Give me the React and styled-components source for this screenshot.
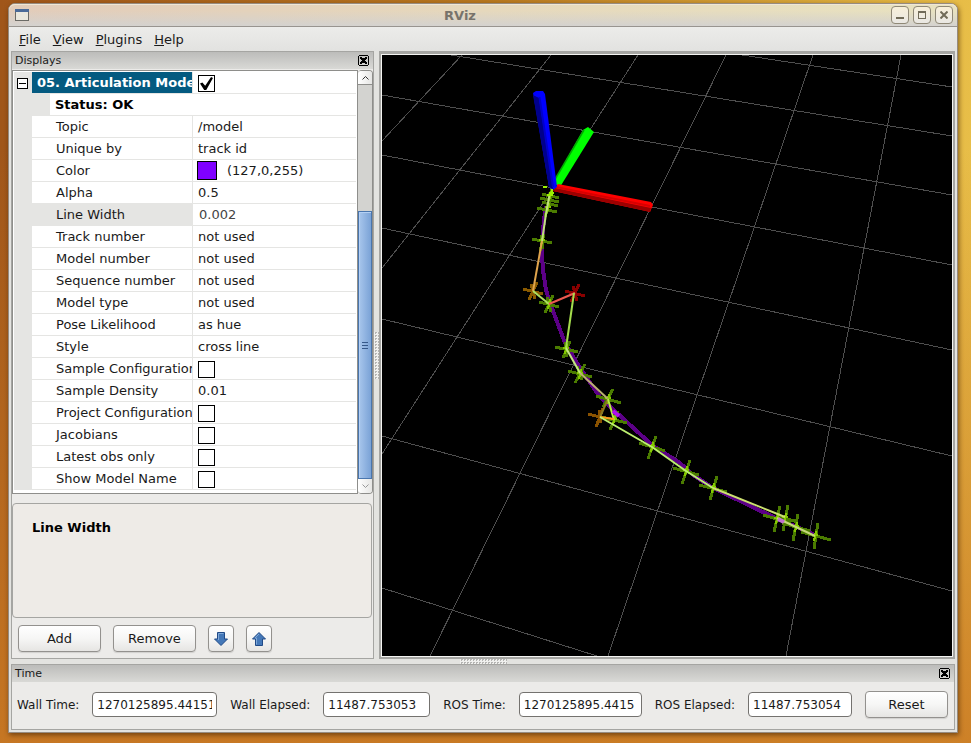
import { useState } from "react";
import styled, { createGlobalStyle } from "styled-components";

const properties = [
  { name: "Topic", value: "/model" },
  { name: "Unique by", value: "track id" },
  { name: "Color", value: "(127,0,255)", type: "color" },
  { name: "Alpha", value: "0.5" },
  { name: "Line Width", value: "0.002", type: "edit" },
  { name: "Track number", value: "not used" },
  { name: "Model number", value: "not used" },
  { name: "Sequence number", value: "not used" },
  { name: "Model type", value: "not used" },
  { name: "Pose Likelihood", value: "as hue" },
  { name: "Style", value: "cross line" },
  { name: "Sample Configurations", type: "check" },
  { name: "Sample Density", value: "0.01" },
  { name: "Project Configurations", type: "check" },
  { name: "Jacobians", type: "check" },
  { name: "Latest obs only", type: "check" },
  { name: "Show Model Name", type: "check" },
];

// ground grid, one [x1, y1, x2, y2] per line
const gridLines = [
  [742, 55, 952, 87],
  [451, 55, 952, 136],
  [382, 95, 952, 195],
  [382, 155, 952, 265],
  [382, 228, 952, 350],
  [382, 319, 952, 456],
  [382, 436, 952, 591],
  [382, 588, 597, 656],
  [462, 55, 382, 141],
  [551, 55, 382, 268],
  [638, 55, 382, 454],
  [726, 55, 430, 656],
  [813, 55, 608, 656],
  [901, 55, 786, 656],
];

const GREEN = "#4b7c00";

// pose crosses, each arm is [dx1, dy1, dx2, dy2] from the centre
const upperArms = [
  [-10, -2, 10, 3],
  [4, -9, -4, 9],
  [-2, -7, 2, 8],
];
const poses = [
  { x: 550, y: 196, color: GREEN, arms: [[-10, 2, 9, 6], [-8, -2, 9, 2], [2, -8, -1, 8]] },
  { x: 548, y: 208, color: GREEN, arms: [[-11, 0, 9, 4], [-6, -6, 10, -2], [2, -8, -3, 9]] },
  { x: 542, y: 241, color: GREEN, arms: [[-10, -2, 10, 2], [2, -7, -2, 10], [-1, -6, 1, 8]] },
  { x: 533, y: 291, color: "#8a5a00", arms: upperArms },
  { x: 549, y: 304, color: GREEN, arms: upperArms },
  { x: 575, y: 293, color: "#8a0000", arms: upperArms },
  { x: 566, y: 349, color: GREEN, arms: [[-11, -2, 12, 3], [4, -8, -3, 9], [-1, -7, 1, 8]] },
  { x: 580, y: 374, color: GREEN, arms: [[-12, -3, 12, 3], [5, -10, -5, 9], [-3, -8, 2, 6]] },
  { x: 608, y: 399, color: GREEN, arms: [[-12, -3, 13, 4], [5, -10, -5, 8]] },
  { x: 600, y: 417, color: "#8a5200", arms: [[-12, -3, 12, 3], [3, -9, -4, 10], [-1, -7, 1, 6]] },
  { x: 614, y: 420, color: GREEN, arms: [[-12, -3, 13, 3], [4, -9, -4, 10]] },
  { x: 652, y: 447, color: GREEN, arms: [[-13, -4, 13, 4], [4, -11, -4, 12]] },
  { x: 686, y: 471, color: GREEN, arms: [[-13, -3, 13, 4], [4, -11, -4, 13]] },
  { x: 713, y: 488, color: GREEN, arms: [[-14, -3, 14, 4], [4, -12, -3, 12]] },
  { x: 777, y: 519, color: GREEN, arms: [[-14, -4, 14, 4], [3, -13, -3, 13]] },
  { x: 785, y: 518, color: GREEN, arms: [[-8, -2, 13, 4], [3, -13, -2, 13]] },
  { x: 796, y: 527, color: GREEN, arms: [[-14, -4, 14, 4], [2, -13, -3, 14]] },
  { x: 815, y: 536, color: GREEN, arms: [[-14, -4, 16, 4], [3, -13, -1, 13]] },
];

const track = [
  { points: "550,192 546,214 542,241", color: "#bfe07c" },
  { points: "542,241 533,291", color: "#e0a44c" },
  { points: "533,291 549,304", color: "#aee060" },
  { points: "549,304 575,293", color: "#ee5a50" },
  { points: "574,293 566,348", color: "#a4dc4c" },
  { points: "566,348 580,373", color: "#c4e880" },
  { points: "580,373 608,399", color: "#bcb070" },
  { points: "608,399 600,417", color: "#8a7a20" },
  { points: "608,399 614,420", color: "#b8f040" },
  { points: "600,417 614,419", color: "#ff9a20" },
  { points: "600,417 652,447 686,471 713,488", color: "#bdf070" },
  { points: "713,488 785,517", color: "#ccdf70" },
  { points: "777,518 796,527 815,536", color: "#c4d878" },
];

function Scene() {
  return (
    <Canvas
      viewBox="382 55 570 601"
      preserveAspectRatio="xMidYMid slice"
      role="img"
      aria-label="3D view of the articulation model"
    >
      <g stroke="#4e4e4e" shapeRendering="crispEdges">
        {gridLines.map(([x1, y1, x2, y2]) => (
          <line key={`${x1}-${y1}-${x2}`} x1={x1} y1={y1} x2={x2} y2={y2} />
        ))}
      </g>

      {/* fitted model */}
      <polyline
        points="546,206 544,220 542,240 542,256 543,270 546,290 550,303 565,343 580,368 600,397 617,413 652,445 680,463 693,475 713,488 763,512 780,520 797,527 815,535"
        fill="none"
        stroke="#5c0087"
        strokeWidth="4"
        shapeRendering="crispEdges"
      />

      {/* observed poses */}
      {poses.map((pose) => (
        <g
          key={`${pose.x}-${pose.y}`}
          stroke={pose.color}
          strokeWidth="3"
          shapeRendering="crispEdges"
        >
          {pose.arms.map(([x1, y1, x2, y2]) => (
            <line
              key={`${x1}${y1}${x2}`}
              x1={pose.x + x1}
              y1={pose.y + y1}
              x2={pose.x + x2}
              y2={pose.y + y2}
            />
          ))}
        </g>
      ))}
      {poses
        .filter((pose) => pose.color === GREEN)
        .map((pose) => (
          <path
            key={`${pose.x}-${pose.y}`}
            d={`M${pose.x + 1} ${pose.y - 5}L${pose.x - 1} ${pose.y + 5}M${pose.x - 3} ${pose.y - 1}h6`}
            stroke="#84c800"
            strokeWidth="2"
            shapeRendering="crispEdges"
          />
        ))}
      {track.map((part) => (
        <polyline
          key={part.points}
          points={part.points}
          fill="none"
          stroke={part.color}
          strokeWidth="2"
        />
      ))}
      <path d="M613 411l6 5" stroke="#b010f0" strokeWidth="4" />
      <path d="M778 519l6 3" stroke="#c070d0" strokeWidth="4" />

      {/* axes */}
      <polygon points="553,183 583,130 588,127 594,132 560,187" fill="#00ff00" />
      <path d="M554 181L584 130" stroke="#00a800" strokeWidth="1.5" />
      <polygon points="558,184 651,202 653,205 650,212 646,211 553,191" fill="#ff0000" />
      <polygon points="555,188 651,208 650,212 646,211 553,191" fill="#9c0000" />
      <path d="M556 187L650 206" stroke="#d80000" strokeWidth="2" />
      <polygon points="533,93 536,91 543,91 545,94 557,187 553,190 549,187" fill="#0000ff" />
      <polygon points="533,95 539,98 553,189 549,187" fill="#00008c" />
      <path d="M539.5 97L553 187" stroke="#0000cc" strokeWidth="2" />
      <path d="M543 187h4M549 193h5M547 195h6M552 189v5" stroke="#9cf000" strokeWidth="2" />
    </Canvas>
  );
}

function ArrowIcon({ up }) {
  return (
    <svg width="16" height="16" viewBox="0 0 16 16" aria-hidden="true">
      <path
        d={up ? "M8 1.5L14.5 8H11.5V14.5H4.5V8H1.5Z" : "M8 14.5L14.5 8H11.5V1.5H4.5V8H1.5Z"}
        fill="#4478b8"
        stroke="#204a87"
      />
      <path
        d={up ? "M8 3L4 7H5.5V13.5" : "M5.5 9V2.5H10.5"}
        fill="none"
        stroke="#7fa8d8"
      />
    </svg>
  );
}

function CloseGlyph() {
  return (
    <svg width="11" height="11" viewBox="0 0 11 11" shapeRendering="crispEdges" aria-hidden="true">
      <path d="M1 0h9v1h1v9h-1v1H1v-1H0V1h1zM1 1v9h9V1z" fill="#000" fillRule="evenodd" />
      <path d="M2 2h2v1h3V2h2v2H8v1H7v1h1v1h1v2H7V8H4v1H2V7h1V6h1V5H3V4H2z" fill="#000" />
    </svg>
  );
}

function PropertyRow({ prop }) {
  const [checked, setChecked] = useState(false);
  const [text, setText] = useState(prop.value);
  const id = prop.name.toLowerCase().replaceAll(" ", "-");
  const selected = prop.type === "edit";
  const hasControl = prop.type === "check" || selected;

  return (
    <tr>
      <Gutter $selected={selected} />
      <NameCell $selected={selected} colSpan={2}>
        {hasControl ? <label htmlFor={id}>{prop.name}</label> : prop.name}
      </NameCell>
      <ValueCell>
        {prop.type === "check" && (
          <CheckBox id={id} type="checkbox" checked={checked} onChange={() => setChecked(!checked)} />
        )}
        {prop.type === "edit" && (
          <CellInput id={id} value={text} onChange={(e) => setText(e.target.value)} />
        )}
        {prop.type === "color" && (
          <ColorValue>
            <Swatch />
            {prop.value}
          </ColorValue>
        )}
        {!prop.type && prop.value}
      </ValueCell>
    </tr>
  );
}

function DisplaysPanel() {
  const [enabled, setEnabled] = useState(true);

  return (
    <Displays>
      <PanelHeader>
        Displays
        <PanelClose type="button" aria-label="Close displays">
          <CloseGlyph />
        </PanelClose>
      </PanelHeader>
      <GridArea>
        <GridFrame>
          <PropertyTable>
            <colgroup>
              <col width="18" />
              <col width="18" />
              <col width="142" />
              <col />
            </colgroup>
            <tbody>
              <tr>
                <Gutter>
                  <Expander type="button" aria-label="Collapse" />
                </Gutter>
                <GroupCell colSpan={2}>
                  <label htmlFor="display-enabled">05. Articulation Models</label>
                </GroupCell>
                <ValueCell>
                  <CheckBox
                    id="display-enabled"
                    type="checkbox"
                    checked={enabled}
                    onChange={() => setEnabled(!enabled)}
                  />
                </ValueCell>
              </tr>
              <tr>
                <Gutter colSpan={2} />
                <StatusCell colSpan={2}>Status: OK</StatusCell>
              </tr>
              {properties.map((prop) => (
                <PropertyRow key={prop.name} prop={prop} />
              ))}
            </tbody>
          </PropertyTable>
        </GridFrame>
        <ScrollBar>
          <ScrollButton type="button" aria-label="Scroll up">
            <svg width="7" height="4" viewBox="0 0 7 4" aria-hidden="true">
              <path d="M0.5 3.5L3.5 0.5L6.5 3.5" fill="none" stroke="#333" />
            </svg>
          </ScrollButton>
          <ScrollTrack>
            <ScrollThumb>
              <i />
              <i />
              <i />
            </ScrollThumb>
          </ScrollTrack>
          <ScrollButton type="button" aria-label="Scroll down" $end>
            <svg width="7" height="4" viewBox="0 0 7 4" aria-hidden="true">
              <path d="M0.5 0.5L3.5 3.5L6.5 0.5" fill="none" stroke="#999" />
            </svg>
          </ScrollButton>
        </ScrollBar>
      </GridArea>
      <HelpBox>Line Width</HelpBox>
      <ButtonRow>
        <PushButton type="button">Add</PushButton>
        <PushButton type="button">Remove</PushButton>
        <IconButton type="button" aria-label="Move down">
          <ArrowIcon />
        </IconButton>
        <IconButton type="button" aria-label="Move up">
          <ArrowIcon up />
        </IconButton>
      </ButtonRow>
    </Displays>
  );
}

function TimePanel() {
  return (
    <Time>
      <PanelHeader>
        Time
        <PanelClose type="button" aria-label="Close time">
          <CloseGlyph />
        </PanelClose>
      </PanelHeader>
      <TimeRow>
        <TimeLabel htmlFor="wall-time">Wall Time:</TimeLabel>
        <TimeInput id="wall-time" $width={125} readOnly value="1270125895.441515" />
        <TimeLabel htmlFor="wall-elapsed">Wall Elapsed:</TimeLabel>
        <TimeInput id="wall-elapsed" $width={107} readOnly value="11487.753053" />
        <TimeLabel htmlFor="ros-time">ROS Time:</TimeLabel>
        <TimeInput id="ros-time" $width={123} readOnly value="1270125895.4415" />
        <TimeLabel htmlFor="ros-elapsed">ROS Elapsed:</TimeLabel>
        <TimeInput id="ros-elapsed" $width={104} readOnly value="11487.753054" />
        <PushButton type="button">Reset</PushButton>
      </TimeRow>
    </Time>
  );
}

export default function App() {
  return (
    <>
      <GlobalStyle />
      <Desktop>
        <Window>
          <TitleBar>
            <svg width="14" height="12" viewBox="0 0 14 12" shapeRendering="crispEdges" aria-hidden="true">
              <path d="M0.5 0.5h13v11H0.5z" fill="#e9e7dd" stroke="#6b6b66" />
              <path d="M0 0h14v3H0z" fill="#4a6a98" />
            </svg>
            <Title>RViz</Title>
            <WindowButtons>
              <WindowButton type="button" aria-label="Minimize">
                <svg width="8" height="8" viewBox="0 0 8 8" aria-hidden="true">
                  <path d="M0 6h8v2H0z" fill="#716b58" />
                </svg>
              </WindowButton>
              <WindowButton type="button" aria-label="Maximize">
                <svg width="8" height="8" viewBox="0 0 8 8" shapeRendering="crispEdges" aria-hidden="true">
                  <path d="M0 0h8v8H0zM1 2v5h6V2z" fill="#716b58" fillRule="evenodd" />
                </svg>
              </WindowButton>
              <WindowButton type="button" aria-label="Close">
                <svg width="8" height="8" viewBox="0 0 8 8" aria-hidden="true">
                  <path d="M0.5 0.5L7.5 7.5M7.5 0.5L0.5 7.5" stroke="#716b58" strokeWidth="2" />
                </svg>
              </WindowButton>
            </WindowButtons>
          </TitleBar>
          <MenuBar>
            {["File", "View", "Plugins", "Help"].map((item) => (
              <MenuItem key={item} type="button">
                <u>{item[0]}</u>
                {item.slice(1)}
              </MenuItem>
            ))}
          </MenuBar>
          <Body>
            <Upper>
              <DisplaysPanel />
              <Sash $vertical>
                <Grip $vertical />
              </Sash>
              <Viewport>
                <Scene />
              </Viewport>
            </Upper>
            <Sash>
              <Grip />
            </Sash>
            <TimePanel />
          </Body>
        </Window>
      </Desktop>
    </>
  );
}

/* ---------------- Global ---------------- */

const GlobalStyle = createGlobalStyle`
  * {
    box-sizing: border-box;
  }

  body {
    margin: 0;
    font-family: "DejaVu Sans", sans-serif;
    font-size: 13px;
    color: #1a1a1a;
  }

  button,
  input {
    font: inherit;
    color: inherit;
  }
`;

const Desktop = styled.div`
  height: 100vh;
  min-height: 700px;
  padding: 3px 13px 10px 8px;
  display: flex;
  background:
    linear-gradient(180deg, transparent 20%, rgba(202, 122, 36, 0.9) 100%),
    linear-gradient(90deg, #a0561a, #b8781f 50%, #e8be48);
`;

const Window = styled.div`
  flex: 1;
  min-width: 0;
  display: flex;
  flex-direction: column;
  border: 1px solid #968b80;
  border-radius: 7px 7px 0 0;
  background: #e3e3e0;
  box-shadow: 1px 2px 5px rgba(60, 30, 0, 0.6);
`;

/* ---------------- Title and menu ---------------- */

const TitleBar = styled.div`
  height: 23px;
  padding: 0 4px 0 6px;
  display: flex;
  align-items: center;
  border-bottom: 1px solid #98948f;
  border-radius: 6px 6px 0 0;
  box-shadow: inset 0 1px 0 #efe6d6;
  background:
    linear-gradient(180deg, transparent 30%, #d4d2cf 100%),
    linear-gradient(90deg, #e2ccba, #e6d8bc 50%, #e8e2c0);
`;

const Title = styled.h1`
  flex: 1;
  margin: 0;
  text-align: center;
  font-size: 13px;
  font-weight: 700;
  color: #77736b;
`;

const WindowButtons = styled.div`
  display: flex;
  gap: 4px;
`;

const WindowButton = styled.button`
  width: 18px;
  height: 18px;
  padding: 0;
  display: flex;
  align-items: center;
  justify-content: center;
  border: 1px solid #8f8876;
  border-radius: 4px;
  background: linear-gradient(180deg, #f8efd9, #e9e7e3);
`;

const MenuBar = styled.div`
  height: 24px;
  padding: 0 5px;
  display: flex;
  align-items: center;
  gap: 2px;
  background: linear-gradient(180deg, #ececea, #e2e2e0);
`;

const MenuItem = styled.button`
  padding: 0 5px;
  border: none;
  background: none;
`;

/* ---------------- Docking ---------------- */

const Body = styled.div`
  flex: 1;
  min-height: 0;
  padding: 0 2px 2px;
  display: flex;
  flex-direction: column;
`;

const Upper = styled.div`
  flex: 1;
  min-height: 0;
  display: flex;
`;

const Sash = styled.div`
  flex: none;
  display: flex;
  align-items: center;
  justify-content: center;
  ${(props) => (props.$vertical ? "width: 5px;" : "height: 5px;")}
`;

const Grip = styled.div`
  width: ${(props) => (props.$vertical ? "5px" : "47px")};
  height: ${(props) => (props.$vertical ? "47px" : "5px")};
  background: conic-gradient(#b4b4b2 25%, #f0f0ee 0) 0 0 / 3px 3px;
`;

const Viewport = styled.div`
  flex: 1;
  min-width: 0;
  min-height: 0;
  display: flex;
  border: 2px solid #a5a5a2;
  border-top-width: 3px;
  box-shadow: inset 0 0 0 1px #f4f4f2;
  padding: 1px;
`;

const Canvas = styled.svg`
  flex: 1;
  min-width: 0;
  height: 100%;
  display: block;
  background: #000;
`;

const PanelHeader = styled.div`
  height: 17px;
  flex: none;
  padding: 0 4px 1px 3px;
  display: flex;
  align-items: center;
  justify-content: space-between;
  font-size: 11px;
  background: linear-gradient(180deg, #bcbcba, #d9d9d6);
`;

const PanelClose = styled.button`
  padding: 0;
  display: flex;
  border: none;
  background: none;
`;

/* ---------------- Displays panel ---------------- */

const Displays = styled.div`
  width: 363px;
  flex: none;
  display: flex;
  flex-direction: column;
  border: 1px solid #a5a5a2;
  background: #ecebe9;
`;

const GridArea = styled.div`
  margin-top: 1px;
  flex: none;
  display: flex;
`;

const GridFrame = styled.div`
  flex: 1;
  min-width: 0;
  padding: 1px 1px 3px;
  overflow: hidden;
  border: 1px solid #8e8e8b;
  background: #fff;
`;

const PropertyTable = styled.table`
  width: 100%;
  table-layout: fixed;
  border-collapse: separate;
  border-spacing: 0;

  td {
    height: 22px;
    padding: 0;
    line-height: 21px;
    white-space: nowrap;
    overflow: hidden;
  }
`;

const Gutter = styled.td`
  background: #e5e5e3;
`;

const Expander = styled.button`
  width: 11px;
  height: 11px;
  margin-left: 3px;
  padding: 0;
  display: block;
  border: 1px solid #000;
  background: linear-gradient(#000, #000) center / 7px 1px no-repeat #fff;
`;

const GroupCell = styled.td`
  && {
    padding-left: 5px;
  }
  border-bottom: 1px solid #e5e5e3;
  background: #045a80;
  color: #fff;
  font-weight: 700;
`;

const StatusCell = styled.td`
  && {
    padding-left: 5px;
  }
  border-bottom: 1px solid #e5e5e3;
  color: #000;
  font-weight: 700;
`;

const NameCell = styled.td`
  && {
    padding-left: 24px;
  }
  border-bottom: 1px solid #e5e5e3;
  background: ${(props) => (props.$selected ? "#e5e5e3" : "#fff")};
`;

const ValueCell = styled.td`
  && {
    padding-left: 5px;
  }
  border-left: 1px solid #e5e5e3;
  border-bottom: 1px solid #e5e5e3;
`;

const CheckBox = styled.input`
  appearance: none;
  width: 17px;
  height: 17px;
  margin: 2px 0 0;
  display: block;
  border: 1px solid #000;
  background: #fff;

  &:checked::before {
    content: "";
    display: block;
    width: 13px;
    height: 13px;
    margin: 1px;
    background: #000;
    clip-path: polygon(0 50%, 18% 42%, 40% 68%, 85% 0, 100% 8%, 48% 100%, 32% 100%);
  }
`;

const CellInput = styled.input`
  width: 100%;
  height: 21px;
  padding: 0 1px;
  display: block;
  border: none;
  outline: none;
  background: #fff;
  color: #444;
`;

const ColorValue = styled.span`
  display: flex;
  align-items: center;
  gap: 10px;
`;

const Swatch = styled.span`
  width: 20px;
  height: 19px;
  margin-left: -1px;
  border: 1px solid #000;
  background: #7f00ff;
`;

const ScrollBar = styled.div`
  width: 15px;
  flex: none;
  display: flex;
  flex-direction: column;
  border: 1px solid #8e8e8b;
  border-left: none;
  border-radius: 4px;
`;

const ScrollButton = styled.button`
  height: 14px;
  flex: none;
  padding: 0;
  display: flex;
  align-items: center;
  justify-content: center;
  border: none;
  border-bottom: ${(props) => (props.$end ? "none" : "1px solid #8e8e8b")};
  border-radius: ${(props) => (props.$end ? "0 0 3px 3px" : "3px 3px 0 0")};
  background: linear-gradient(90deg, #fff, #e6e6e4);
`;

const ScrollTrack = styled.div`
  flex: 1;
  display: flex;
  flex-direction: column;
  justify-content: flex-end;
  background: #d3d3d0;
`;

const ScrollThumb = styled.div`
  height: 68%;
  display: flex;
  flex-direction: column;
  align-items: center;
  justify-content: center;
  gap: 2px;
  border: 1px solid #4a76ae;
  box-shadow: inset 1px 1px 0 #b4d0f4;
  background: linear-gradient(90deg, #a8c6ec, #7aa2d6);

  i {
    width: 6px;
    height: 1px;
    background: #35588a;
  }
`;

const HelpBox = styled.div`
  flex: 1;
  margin: 9px 1px 0 0;
  padding: 16px 19px;
  border: 1px solid #a5a5a2;
  border-radius: 4px;
  background: #eeebe7;
  color: #000;
  font-weight: 700;
`;

const ButtonRow = styled.div`
  padding: 7px 6px 6px;
  display: flex;
  gap: 12px;
`;

const PushButton = styled.button`
  width: 83px;
  height: 27px;
  flex: none;
  padding: 0;
  border: 1px solid #93918e;
  border-radius: 4px;
  box-shadow: 0 1px 1px rgba(0, 0, 0, 0.12);
  background: linear-gradient(180deg, #fff, #f6f6f5 50%, #e6e5e3);
`;

const IconButton = styled(PushButton)`
  width: 26px;
  display: flex;
  align-items: center;
  justify-content: center;
`;

/* ---------------- Time panel ---------------- */

const Time = styled.div`
  flex: none;
  display: flex;
  flex-direction: column;
  border: 1px solid #a5a5a2;
  background: #ecebe9;
`;

const TimeRow = styled.div`
  height: 47px;
  padding: 0 6px 2px 5px;
  display: flex;
  align-items: center;
  justify-content: space-between;
`;

const TimeLabel = styled.label`
  font-size: 12px;
  white-space: nowrap;
`;

const TimeInput = styled.input`
  width: ${(props) => props.$width}px;
  height: 25px;
  padding: 0 4px;
  border: 1px solid #74726f;
  border-radius: 4px;
  outline: none;
  background: #fff;
  font-size: 12px;
`;
